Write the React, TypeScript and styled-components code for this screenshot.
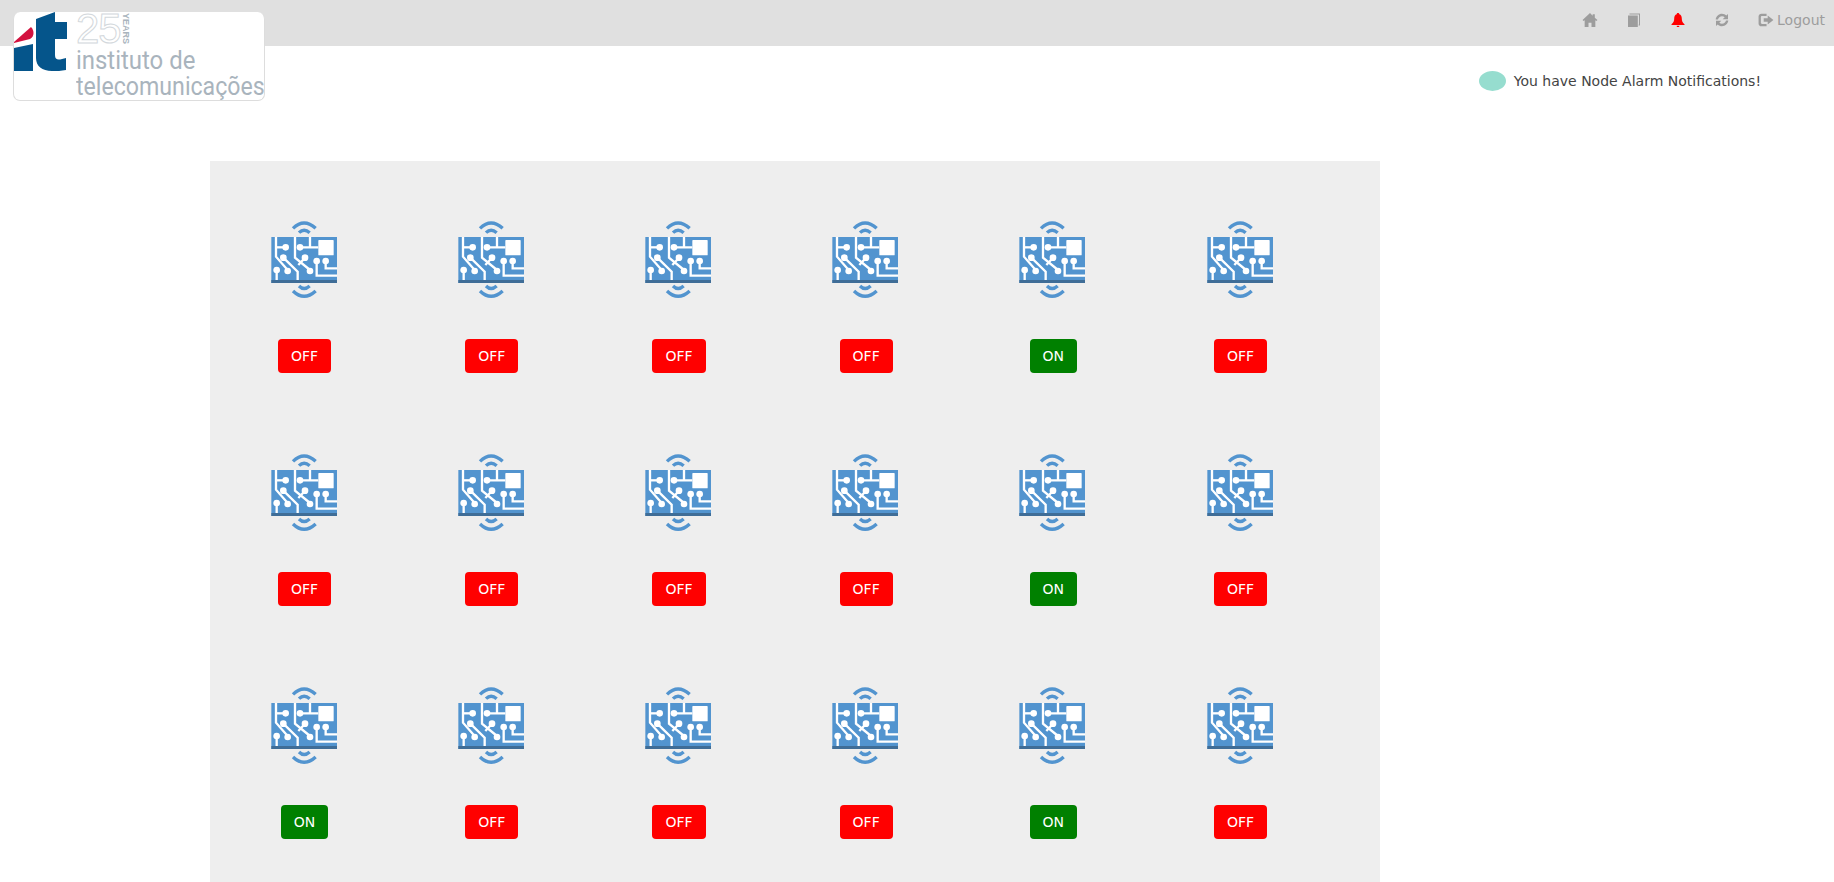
import React from 'react';
import styled, {createGlobalStyle} from "styled-components";

const GlobalStyle = createGlobalStyle`
  html, body {
    margin: 0;
    padding: 0;
    background: #fff;
    overflow: hidden;
    font-family: "DejaVu Sans", sans-serif;
  }
`

const Nav = styled.div`
  height: 46px;
  box-sizing: border-box;
  padding: 0 9px 7px 0;
  background: #e0e0e0;
  display: flex;
  justify-content: flex-end;
  align-items: center;
`

const NavItem = styled.div`
  display: flex;
  align-items: center;
  gap: 3px;
  padding: 0 14px;
  color: #9d9d9d;
  font-size: 14px;
  &:last-child {
    padding-right: 0;
  }
`

const NavIcon = styled.svg<{$alert?: boolean}>`
  width: 16px;
  height: 16px;
  display: block;
  fill: ${p => p.$alert ? '#ff0000' : '#9d9d9d'};
`

const TopRow = styled.div`
  position: relative;
  height: 115px;
  box-sizing: border-box;
  padding: 25px 73px 0 0;
  display: flex;
  justify-content: flex-end;
  align-items: flex-start;
`

const Logo = styled.div`
  position: absolute;
  top: -34px;
  left: 13px;
  width: 252px;
  height: 89px;
  box-sizing: border-box;
  background: #fff;
  border: 1px solid #dddddd;
  border-top: none;
  border-radius: 7px;
  display: flex;
  overflow: hidden;
`

const LogoMark = styled.svg`
  width: 62px;
  height: 89px;
  flex-shrink: 0;
`

const LogoText = styled.div`
  display: flex;
  flex-direction: column;
  color: #a9b4bd;
  white-space: nowrap;
`

const Anniversary = styled.div`
  display: flex;
  height: 34px;
  padding-top: 1px;
`

const TwentyFive = styled.span`
  font-family: "Liberation Sans", sans-serif;
  font-size: 42px;
  line-height: 32px;
  letter-spacing: -1px;
  width: 45px;
  color: #fff;
  -webkit-text-stroke: 1px #d3d8dc;
`

const Years = styled.span`
  writing-mode: vertical-rl;
  font-family: "Liberation Sans", sans-serif;
  font-weight: bold;
  font-size: 9px;
  line-height: 9px;
`

const LogoLine = styled.span`
  font-family: Roboto, sans-serif;
  font-size: 26px;
  line-height: 26px;
  transform: scaleX(0.92);
  transform-origin: left center;
`

const LogoLineLong = styled(LogoLine)`
  transform: scaleX(0.89);
`

const Notice = styled.div`
  display: flex;
  align-items: center;
  gap: 8px;
  height: 20px;
  font-size: 14px;
  color: #444444;
`

const NoticeDot = styled.span`
  width: 27px;
  height: 20px;
  border-radius: 50%;
  background: #96ddcf;
`

const Panel = styled.div`
  width: 1170px;
  height: 721px;
  margin-left: 210px;
  background: #eeeeee;
  display: grid;
  grid-template-columns: repeat(6, 187.2px);
  grid-auto-rows: 233px;
`

const Node = styled.div`
  display: flex;
  flex-direction: column;
  align-items: center;
  padding: 54px 0 0 2px;
`

const NodeIcon = styled.svg`
  width: 78px;
  height: 90px;
  display: block;
  margin: 0 0 34px -2px;
`

const StatusButton = styled.div<{$on: boolean}>`
  height: 34px;
  box-sizing: border-box;
  padding: 0 13px;
  display: flex;
  align-items: center;
  border-radius: 4px;
  font-size: 14px;
  color: #fff;
  background: ${p => p.$on ? '#008000' : '#ff0000'};
`

const CircuitIcon = () => (
    <NodeIcon viewBox="0 0 234 270">
        <g fill="none" stroke="#5294cf" strokeWidth="10">
            <path d="M84 40Q117 8 152 40"/>
            <path d="M102 53Q117 38 134 53"/>
            <path d="M84 228Q117 260 152 228"/>
            <path d="M102 213Q117 228 134 213"/>
        </g>
        <rect x="19" y="66" width="197" height="138" fill="#5294cf"/>
        <rect x="19" y="195" width="197" height="9" fill="#3f6d97"/>
        <g fill="none" stroke="#fff" strokeWidth="7">
            <path d="M33 66V125L68 165"/>
            <path d="M33 97H62"/>
            <path d="M35 165V195"/>
            <path d="M55 128L98 170V195"/>
            <path d="M90 66V128L135 165"/>
            <path d="M120 128L100 150"/>
            <path d="M105 97H160M135 66V97"/>
            <path d="M155 138V182H216"/>
            <path d="M182 138V160H216"/>
        </g>
        <g fill="#fff">
            <rect x="160" y="75" width="46" height="46" rx="2"/>
            <circle cx="62" cy="97" r="10"/>
            <circle cx="105" cy="97" r="10"/>
            <circle cx="55" cy="128" r="10"/>
            <circle cx="120" cy="128" r="10"/>
            <circle cx="68" cy="168" r="10"/>
            <circle cx="35" cy="165" r="10"/>
            <circle cx="135" cy="168" r="10"/>
            <circle cx="155" cy="138" r="10"/>
            <circle cx="182" cy="138" r="10"/>
        </g>
    </NodeIcon>
)

const states = [
    false, false, false, false, true, false,
    false, false, false, false, true, false,
    true, false, false, false, true, false,
]

const App = () => {
    return (
        <>
            <GlobalStyle/>
            <Nav>
                <NavItem>
                    <NavIcon viewBox="-0.5 -0.5 15 15">
                        <path d="M7 .5L0 7.100 1 8 2 7.200V13.500H5.600V9.500H8.400V13.500H12V7.200L13 8 14 7.100 11.500 4.800V1.500H9.500V2.900Z"/>
                    </NavIcon>
                </NavItem>
                <NavItem>
                    <NavIcon viewBox="-1 -1 16 16">
                        <path d="M1 2.500H10.800V14H1Z"/>
                        <path d="M2.500 1.500V.5H13V12.500H11.700V11.500H12V1.500Z"/>
                    </NavIcon>
                </NavItem>
                <NavItem>
                    <NavIcon $alert viewBox="-1 -1 16 16">
                        <path d="M7 0C8 0 8.300.6 8.300 1.300 10 1.900 10.800 3.300 10.800 5.500 10.800 8 11.500 9.800 13.500 11.200V12H.5V11.200C2.500 9.800 3.200 8 3.200 5.500 3.200 3.300 4 1.900 5.700 1.300 5.700.6 6 0 7 0Z"/>
                        <rect x="5.800" y="12.800" width="2.400" height="1.200"/>
                    </NavIcon>
                </NavItem>
                <NavItem>
                    <NavIcon viewBox="-1 -1 16 16">
                        <path d="M7 .8C8.700.8 10.200 1.500 11.300 2.600L13 .9V6.300H7.700L9.700 4.300C9 3.600 8 3.200 7 3.200 5 3.200 3.400 4.600 3 6.500H.7C1.100 3.300 3.700.8 7 .8Z"/>
                        <path d="M7 13.200C5.300 13.200 3.800 12.500 2.700 11.400L1 13.100V7.700H6.300L4.300 9.700C5 10.400 6 10.800 7 10.800 9 10.800 10.600 9.400 11 7.500H13.300C12.900 10.700 10.300 13.200 7 13.200Z"/>
                    </NavIcon>
                </NavItem>
                <NavItem>
                    <NavIcon viewBox="0 0 14 14">
                        <path d="M3 1.500H7.500V3.500H3.500C3 3.500 2.500 3.900 2.500 4.500V9.500C2.500 10.100 3 10.500 3.500 10.500H7.500V12.500H3C1.500 12.500.5 11.500.5 10V4C.5 2.500 1.500 1.500 3 1.500Z"/>
                        <path d="M5 5.500H8.500V3L13.500 7 8.500 11V8.500H5Z"/>
                    </NavIcon>
                    Logout
                </NavItem>
            </Nav>
            <TopRow>
                <Logo>
                    <LogoMark viewBox="0 0 62 89">
                        <path d="M0 30L17 15C20 18 21 24 16 27L0 31Z" fill="#d3123f"/>
                        <path d="M0 36L19 32V59H0Z" fill="#05558b"/>
                        <path d="M22 7L41 0V10H53V27H41V43C41 47 43 48 46 47.500L52 46V58C47 59 43 59 38 59 28 59 22 54 22 46Z" fill="#05558b"/>
                    </LogoMark>
                    <LogoText>
                        <Anniversary>
                            <TwentyFive>25</TwentyFive>
                            <Years>YEARS</Years>
                        </Anniversary>
                        <LogoLine>instituto de</LogoLine>
                        <LogoLineLong>telecomunicações</LogoLineLong>
                    </LogoText>
                </Logo>
                <Notice>
                    <NoticeDot/>
                    You have Node Alarm Notifications!
                </Notice>
            </TopRow>
            <Panel>
                {states.map((on, i) => (
                    <Node key={i}>
                        <CircuitIcon/>
                        <StatusButton $on={on}>{on ? 'ON' : 'OFF'}</StatusButton>
                    </Node>
                ))}
            </Panel>
        </>
    );
};

export default App;
